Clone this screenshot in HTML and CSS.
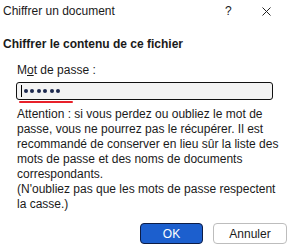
FILE: index.html
```html
<!DOCTYPE html>
<html lang="fr">
<head>
<meta charset="utf-8">
<link rel="stylesheet" href="styles.css">
</head>
<body>
<div class="dialog">
  <div class="titlebar">
    <span class="title">Chiffrer un document</span>
    <span class="help">?</span>
    <span class="close"><svg width="9" height="9" viewBox="0 0 9 9"><path d="M0.5 0.5 L8.5 8.5 M8.5 0.5 L0.5 8.5" stroke="#222" stroke-width="1" fill="none"/></svg></span>
  </div>
  <div class="heading">Chiffrer le contenu de ce fichier</div>
  <div class="body">
    <div class="label">M<u>o</u>t de passe :</div>
    <div class="field"><span class="caret"></span><span class="dot"></span><span class="dot"></span><span class="dot"></span><span class="dot"></span><span class="dot"></span><span class="dot"></span></div>
    <div class="squiggle"></div>
    <p class="note">Attention : si vous perdez ou oubliez le mot de passe, vous ne pourrez pas le récupérer. Il est recommandé de conserver en lieu sûr la liste des mots de passe et des noms de documents correspondants.<br>(N'oubliez pas que les mots de passe respectent la casse.)</p>
  </div>
  <div class="buttons">
    <button class="btn primary">OK</button>
    <button class="btn">Annuler</button>
  </div>
</div>
</body>
</html>
```

FILE: styles.css
```css
* { box-sizing: border-box; }
html, body { margin: 0; padding: 0; background: #fff; }
body {
  width: 292px;
  height: 251px;
  overflow: hidden;
  font-family: "Liberation Sans", Arial, sans-serif;
  font-size: 12px;
  color: #1a1a1a;
}
.titlebar {
  display: flex;
  align-items: center;
  height: 22px;
  padding-left: 3px;
}
.title { flex: 1; line-height: 16px; }
.help { width: 10px; margin-right: 27px; font-size: 12px; }
.close { width: 9px; height: 9px; margin-right: 21px; display: flex; }
.heading {
  font-weight: bold;
  padding-left: 3px;
  margin-top: 14px;
  line-height: 16px;
}
.body { padding-left: 16px; padding-right: 19px; }
.label { margin-top: 10px; line-height: 16px; padding-left: 1px; }
.label u { text-underline-offset: 1px; }
.field {
  margin-top: 4px;
  height: 18px;
  border: 1.5px solid #111;
  border-radius: 3px;
  background: #f3f3f3;
  display: flex;
  align-items: center;
  padding-left: 4px;
  gap: 2.5px;
}
.caret { width: 1px; height: 12px; background: #000; margin-right: -1px; }
.dot { width: 4px; height: 4px; border-radius: 50%; background: #1e2a50; }
.squiggle {
  margin-left: 3px;
  width: 54px;
  height: 2px;
  margin-top: 1px;
  background: #e8202a;
  border-radius: 1px;
}
.note {
  margin: 4px -12px 0 1px;
  line-height: 15px;
}
.buttons {
  display: flex;
  justify-content: flex-end;
  gap: 10px;
  padding-right: 5px;
  margin-top: 11px;
}
.btn {
  font-family: inherit;
  font-size: 12px;
  height: 21px;
  width: 74px;
  border: 1px solid #bdbdbd;
  border-radius: 4px;
  background: #fff;
  color: #1a1a1a;
  padding: 0;
}
.btn.primary {
  width: 63px;
  background: #1c5fce;
  color: #fff;
  border: 1px solid #0e1d45;
}
```
